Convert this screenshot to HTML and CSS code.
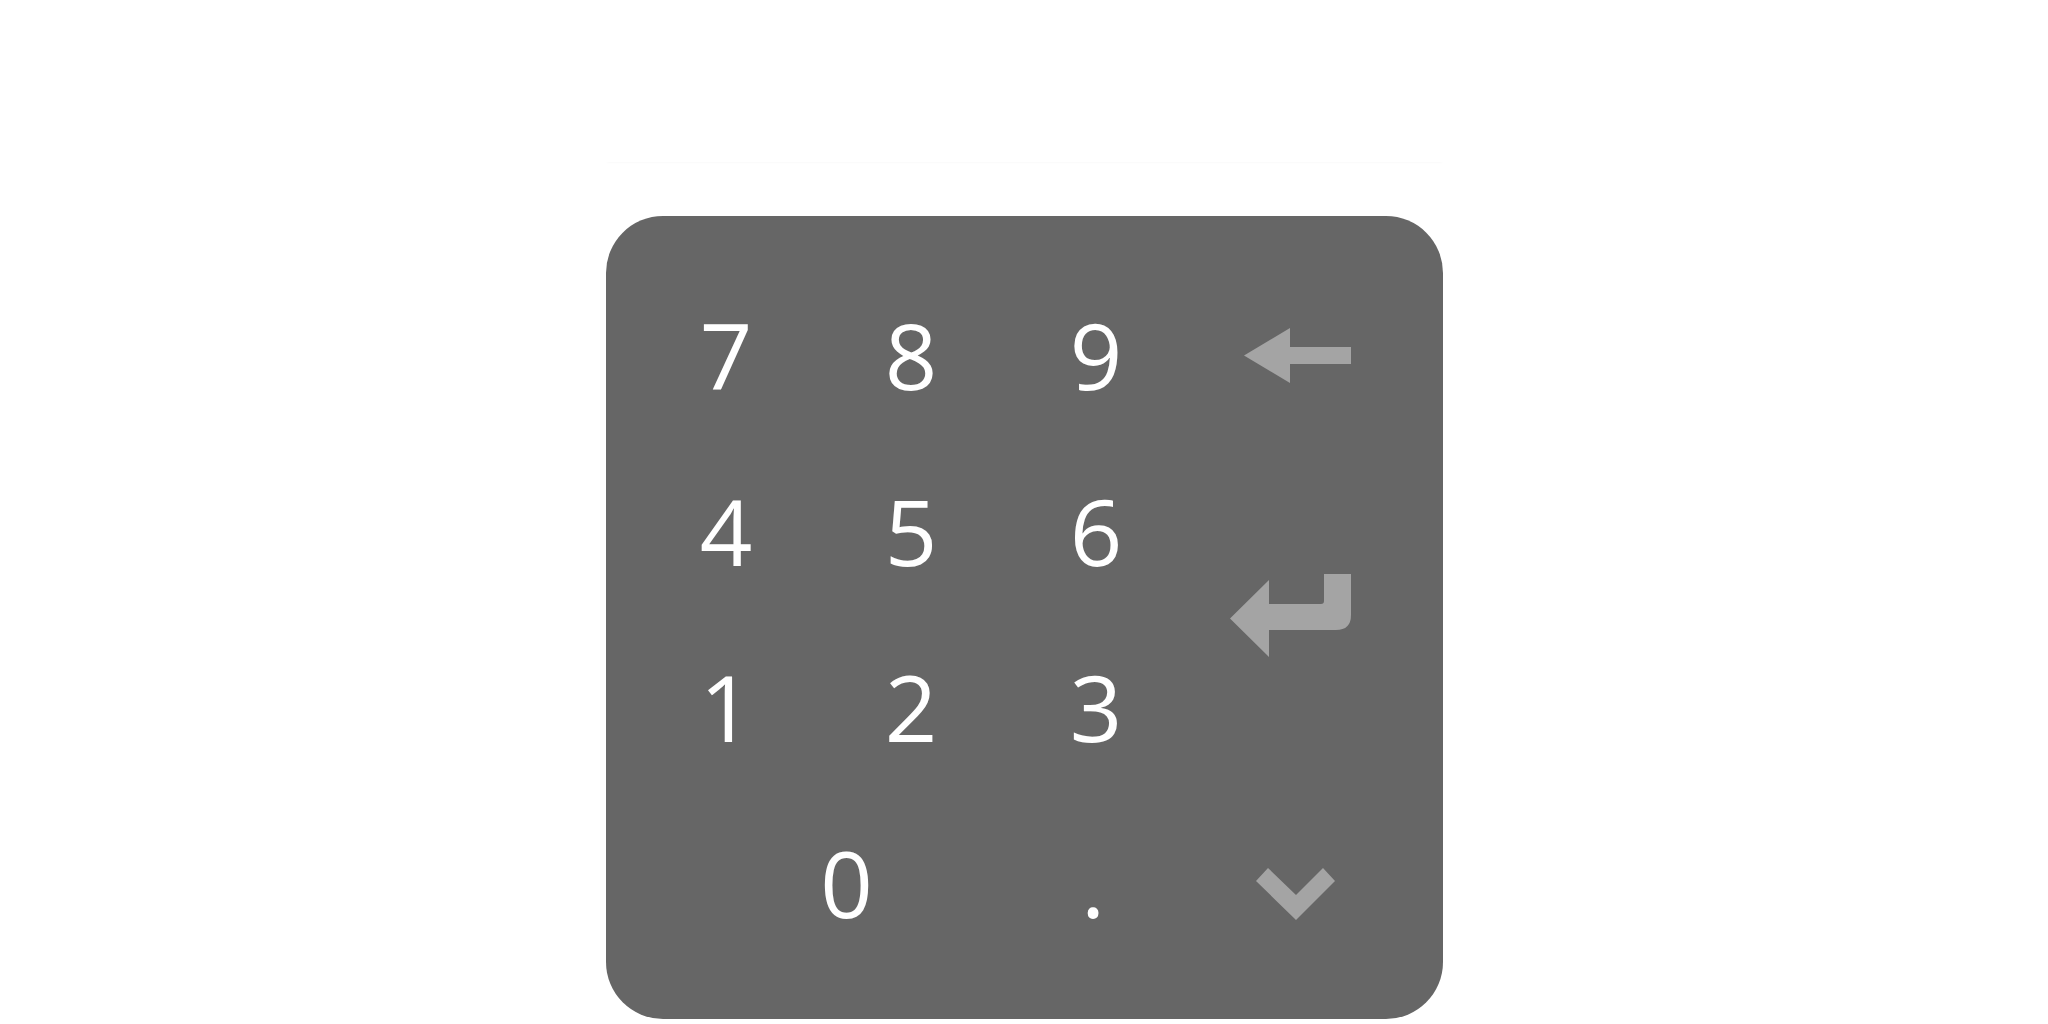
FILE: index.html
```html
<!DOCTYPE html>
<html lang="en">
<head>
<meta charset="utf-8">
<title>Numeric keypad</title>
<link rel="stylesheet" href="styles.css">
</head>
<body>
<main class="page">
  <div class="field" aria-hidden="true"></div>
  <section class="keypad">
    <button class="key">7</button>
    <button class="key">8</button>
    <button class="key">9</button>
    <button class="key icon backspace" aria-label="Backspace">
      <svg width="107" height="55" viewBox="0 0 107 55"><path d="M0 27.5 L46 0 L46 19 L107 19 L107 36 L46 36 L46 55 Z"/></svg>
    </button>
    <button class="key">4</button>
    <button class="key">5</button>
    <button class="key">6</button>
    <button class="key icon enter" aria-label="Enter">
      <svg width="121" height="83" viewBox="0 0 121 83"><path d="M0 44.5 L39 6 L39 30 L91 30 Q94 30 94 27 L94 0 L121 0 L121 41 Q121 56 106 56 L39 56 L39 83 Z"/></svg>
    </button>
    <button class="key">1</button>
    <button class="key">2</button>
    <button class="key">3</button>
    <button class="key zero">0</button>
    <button class="key dot">.</button>
    <button class="key icon hide" aria-label="Hide keypad">
      <svg width="79" height="52" viewBox="0 0 79 52"><path d="M0 13 L12 0 L40 27 L67 0 L79 13 L40 52 Z"/></svg>
    </button>
  </section>
</main>
</body>
</html>
```
FILE: styles.css
```css
html, body {
  margin: 0;
  padding: 0;
  background: #ffffff;
}

.page {
  width: 837px;
  margin: 0 auto;
  padding-top: 60px;
}

.field {
  height: 102px;
  margin-bottom: 54px;
  background: #ffffff;
  box-shadow: 0 2px 2px -1px rgba(0, 0, 0, 0.025);
}

.keypad {
  box-sizing: border-box;
  width: 837px;
  height: 803px;
  background: #666666;
  border-radius: 57px;
  padding: 51px 36px 0 28px;
  display: grid;
  grid-template-columns: 185px 185px 185px 1fr;
  grid-template-rows: 176px 176px 176px 176px;
}

.key {
  border: none;
  background: transparent;
  margin: 0;
  padding: 0;
  color: #ffffff;
  font-family: "Open Sans", "DejaVu Sans", sans-serif;
  font-size: 92px;
  line-height: 1;
  font-weight: 400;
  display: flex;
  align-items: center;
  justify-content: center;
  cursor: pointer;
}

.icon svg {
  display: block;
  fill: #a4a4a4;
}

.backspace {
  grid-column: 4;
  grid-row: 1;
  justify-content: flex-end;
  padding-right: 56px;
  padding-top: 1px;
}

.enter {
  grid-column: 4;
  grid-row: 2 / span 2;
  justify-content: flex-end;
  padding-right: 56px;
  padding-bottom: 8px;
}

.zero {
  grid-column: 1 / span 2;
  grid-row: 4;
  padding-left: 56px;
}

.dot {
  grid-column: 3;
  grid-row: 4;
  padding-right: 6px;
}

.hide {
  grid-column: 4;
  grid-row: 4;
  padding-right: 4px;
  padding-top: 21px;
}
```
